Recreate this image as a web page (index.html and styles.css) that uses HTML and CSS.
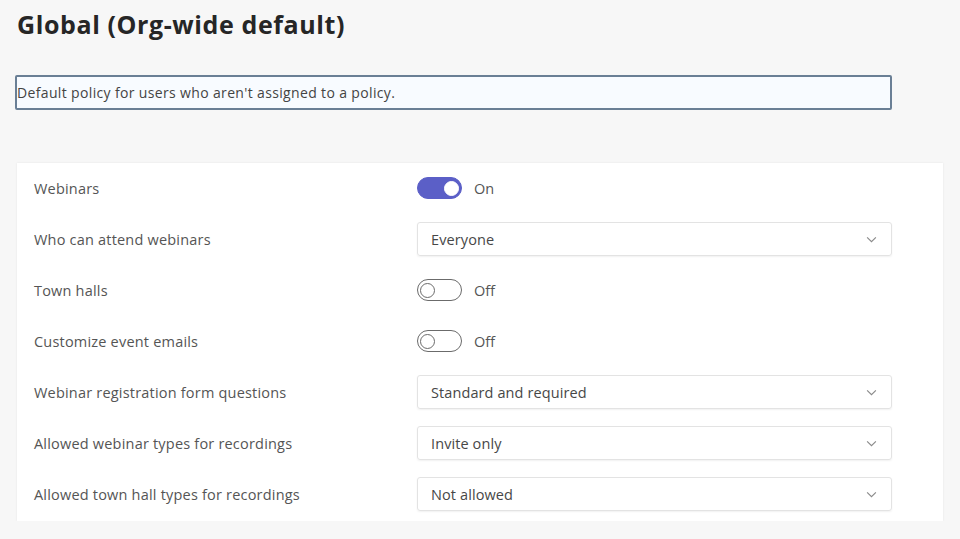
FILE: index.html
```html
<!DOCTYPE html>
<html lang="en">

<head>
  <meta charset="UTF-8" />
  <meta name="viewport" content="width=device-width, initial-scale=1.0" />
  <title>Global (Org-wide default)</title>
  <link rel="stylesheet" href="styles.css">
</head>

<body>
  <main class="page">
    <h1 class="page-title">Global (Org-wide default)</h1>

    <div class="description">Default policy for users who aren't assigned to a policy.</div>

    <section class="settings">
      <div class="row">
        <span class="label">Webinars</span>
        <div class="toggle-wrap">
          <span class="toggle on"><span class="knob"></span></span>
          <span class="state">On</span>
        </div>
      </div>

      <div class="row">
        <span class="label">Who can attend webinars</span>
        <div class="select">
          <span>Everyone</span>
          <svg class="chevron" viewBox="0 0 12 8"><path d="M1 1.5l5 5 5-5" /></svg>
        </div>
      </div>

      <div class="row">
        <span class="label">Town halls</span>
        <div class="toggle-wrap">
          <span class="toggle"><span class="knob"></span></span>
          <span class="state">Off</span>
        </div>
      </div>

      <div class="row">
        <span class="label">Customize event emails</span>
        <div class="toggle-wrap">
          <span class="toggle"><span class="knob"></span></span>
          <span class="state">Off</span>
        </div>
      </div>

      <div class="row">
        <span class="label">Webinar registration form questions</span>
        <div class="select">
          <span>Standard and required</span>
          <svg class="chevron" viewBox="0 0 12 8"><path d="M1 1.5l5 5 5-5" /></svg>
        </div>
      </div>

      <div class="row">
        <span class="label">Allowed webinar types for recordings</span>
        <div class="select">
          <span>Invite only</span>
          <svg class="chevron" viewBox="0 0 12 8"><path d="M1 1.5l5 5 5-5" /></svg>
        </div>
      </div>

      <div class="row">
        <span class="label">Allowed town hall types for recordings</span>
        <div class="select">
          <span>Not allowed</span>
          <svg class="chevron" viewBox="0 0 12 8"><path d="M1 1.5l5 5 5-5" /></svg>
        </div>
      </div>
    </section>
  </main>
</body>

</html>
```

FILE: styles.css
```css
/* Base */
body {
  margin: 0;
  font-family: 'Open Sans', 'Noto Sans', sans-serif;
  background-color: #f7f7f7;
  color: #424242;
}

.page {
  padding: 5px 17px 0 15px;
}

/* Title */
.page-title {
  margin: 0 0 0 2px;
  font-size: 25px;
  font-weight: 700;
  color: #262626;
  line-height: 38px;
  letter-spacing: 0.6px;
}

/* Description field */
.description {
  margin-top: 32px;
  width: 873px;
  height: 31px;
  border: 2px solid #6a7f95;
  border-radius: 2px;
  background-color: #f8fbff;
  font-size: 14px;
  letter-spacing: 0.35px;
  color: #444;
  line-height: 31px;
  padding-left: 0;
  box-sizing: content-box;
}

/* Settings card */
.settings {
  margin: 53px 0 0 2px;
  width: 926px;
  box-sizing: border-box;
  background-color: #fff;
  box-shadow: 0 0 2px rgba(0, 0, 0, 0.08);
  padding: 8px 51px 10px 17px;
  display: flex;
  flex-direction: column;
  gap: 17px;
}

.row {
  display: grid;
  grid-template-columns: 383px 1fr;
  align-items: center;
  height: 34px;
}

.label {
  font-size: 14.5px;
  letter-spacing: 0.2px;
  color: #555;
}

/* Toggle */
.toggle-wrap {
  display: flex;
  align-items: center;
  gap: 12px;
}

.toggle {
  width: 45px;
  height: 22px;
  box-sizing: border-box;
  border: 1.5px solid #6b6b6b;
  border-radius: 11px;
  display: flex;
  align-items: center;
  padding: 0 2px;
}

.toggle .knob {
  width: 15px;
  height: 15px;
  border-radius: 50%;
  border: 1.5px solid #6b6b6b;
  box-sizing: border-box;
}

.toggle.on {
  background-color: #5b5fc7;
  border-color: #5b5fc7;
  justify-content: flex-end;
}

.toggle.on .knob {
  background-color: #fff;
  border-color: #fff;
  width: 15px;
  height: 15px;
}

.state {
  font-size: 14.5px;
  color: #555;
}

/* Dropdown */
.select {
  height: 34px;
  box-sizing: border-box;
  border: 1px solid #e3e3e3;
  border-radius: 3px;
  box-shadow: 0 1px 2px rgba(0, 0, 0, 0.06);
  display: flex;
  align-items: center;
  justify-content: space-between;
  padding: 0 14px 0 13px;
  font-size: 14.5px;
  letter-spacing: 0.1px;
  color: #474747;
}

.chevron {
  width: 11px;
  height: 7px;
  fill: none;
  stroke: #8a8a8a;
  stroke-width: 1.3;
}
```
